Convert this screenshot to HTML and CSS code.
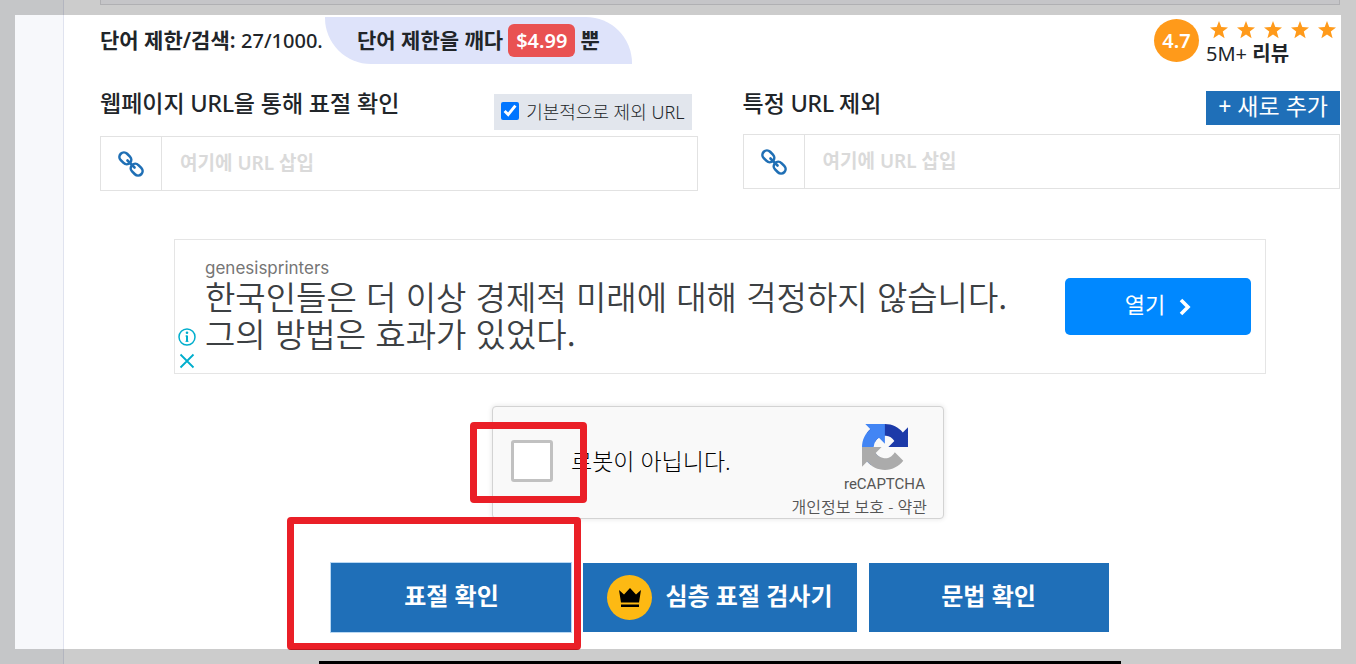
FILE: index.html
```html
<!DOCTYPE html>
<html lang="ko">
<head>
  <meta charset="UTF-8">
  <meta name="viewport" content="width=device-width, initial-scale=1.0">
  <title>표절 확인</title>
  <link rel="stylesheet" href="styles.css">
</head>
<body>

<svg class="defs" aria-hidden="true">
  <symbol id="star" viewBox="0 0 18 18">
    <path d="M9 0l2.3 6.1 6.7.3-5.2 4.2 1.8 6.6L9 13.5l-5.6 3.7 1.8-6.6L0 6.4l6.7-.3z"/>
  </symbol>
  <symbol id="chain" viewBox="0 0 26 26">
    <g fill="none" stroke="#1f6fb5" stroke-width="2.6" transform="rotate(45 13 13)">
      <rect x="-1.5" y="8.5" width="13" height="9" rx="4.5"/>
      <rect x="14.5" y="8.5" width="13" height="9" rx="4.5"/>
      <path d="M8 13h10" stroke-linecap="round"/>
    </g>
  </symbol>
</svg>

<div class="page">
  <aside class="side"></aside>
  <main class="content">
    <div class="editor-end"></div>

    <div class="stats">
      <div class="word-limit">단어 제한/검색: <span class="count">27/1000.</span></div>
      <a class="upgrade" href="#">단어 제한을 깨다 <span class="price">$4.99</span> 뿐</a>
      <div class="rating">
        <div class="score">4.7</div>
        <div class="rating-text">
          <div class="stars">
            <svg><use href="#star"/></svg>
            <svg><use href="#star"/></svg>
            <svg><use href="#star"/></svg>
            <svg><use href="#star"/></svg>
            <svg><use href="#star"/></svg>
          </div>
          <div class="reviews">5M+ <b>리뷰</b></div>
        </div>
      </div>
    </div>

    <div class="url-columns">
      <div>
        <div class="url-head">
          <label class="title" for="checkUrl">웹페이지 URL을 통해 표절 확인</label>
          <label class="exclude-default"><input type="checkbox" checked> 기본적으로 제외 URL</label>
        </div>
        <div class="url-box">
          <span class="url-icon"><svg><use href="#chain"/></svg></span>
          <input id="checkUrl" type="text" placeholder="여기에 URL 삽입">
        </div>
      </div>
      <div>
        <div class="url-head">
          <label class="title" for="excludeUrl">특정 URL 제외</label>
          <button class="add-new">+ 새로 추가</button>
        </div>
        <div class="url-box">
          <span class="url-icon"><svg><use href="#chain"/></svg></span>
          <input id="excludeUrl" type="text" placeholder="여기에 URL 삽입">
        </div>
      </div>
    </div>

    <div class="ad">
      <div class="ad-marks">
        <svg viewBox="0 0 18 18" fill="none" stroke="#00aecd">
          <circle cx="9" cy="9" r="8" stroke-width="1.5"/>
          <path d="M9 7.5v6" stroke-width="2"/>
          <path d="M7.5 8H9M7.5 13.3h3" stroke-width="1"/>
          <circle cx="9" cy="4.8" r="1.3" fill="#00aecd" stroke="none"/>
        </svg>
        <svg viewBox="0 0 18 18" fill="none" stroke="#00aecd" stroke-width="1.8">
          <path d="M2.5 2.5l13 13M15.5 2.5l-13 13"/>
        </svg>
      </div>
      <div class="ad-text">
        <div class="ad-brand">genesisprinters</div>
        <div class="ad-title">한국인들은 더 이상 경제적 미래에 대해 걱정하지 않습니다.<br>그의 방법은 효과가 있었다.</div>
      </div>
      <button class="ad-open">열기
        <svg viewBox="0 0 12 18" fill="none" stroke="#fff" stroke-width="3.6"><path d="M2 2l7 7-7 7"/></svg>
      </button>
    </div>

    <div class="captcha-row">
      <div class="captcha">
        <div class="captcha-check">
          <input id="robot" type="checkbox">
          <span class="marker"></span>
        </div>
        <label for="robot">로봇이 아닙니다.</label>
        <div class="captcha-brand">
          <svg viewBox="0 0 64 64">
            <path fill="#1c3aa9" d="M64 31.955l-.033-1.37V4.687l-7.16 7.16C50.948 4.674 42.033.093 32.05.093c-10.4 0-19.622 4.96-25.458 12.64l11.736 11.86a15.55 15.55 0 0 1 4.754-5.334c2.05-1.6 4.952-2.906 8.968-2.906.485 0 .86.057 1.135.163 4.976.393 9.288 3.14 11.828 7.124l-8.307 8.307L64 31.953"/>
            <path fill="#4285f4" d="M31.862.094l-1.37.033H4.594l7.16 7.16C4.58 13.147 0 22.06 0 32.046c0 10.4 4.96 19.622 12.64 25.458L24.5 45.768a15.55 15.55 0 0 1-5.334-4.754c-1.6-2.05-2.906-4.952-2.906-8.968 0-.485.057-.86.163-1.135.393-4.976 3.14-9.288 7.124-11.828l8.307 8.307L31.86.095"/>
            <path fill="#ababab" d="M.001 32.045l.033 1.37v25.898l7.16-7.16c5.86 7.173 14.774 11.754 24.76 11.754 10.4 0 19.622-4.96 25.458-12.64l-11.736-11.86a15.55 15.55 0 0 1-4.754 5.334c-2.05 1.6-4.952 2.906-8.968 2.906-.485 0-.86-.057-1.135-.163-4.976-.393-9.288-3.14-11.828-7.124l8.307-8.307c-10.522.04-22.4.066-27.295-.005"/>
          </svg>
          <div class="captcha-name">reCAPTCHA</div>
          <div class="captcha-links"><a href="#">개인정보 보호</a> - <a href="#">약관</a></div>
        </div>
      </div>
    </div>

    <div class="actions">
      <div class="action-main">
        <button class="action">표절 확인</button>
        <span class="marker"></span>
      </div>
      <button class="action deep">
        <span class="crown">
          <svg viewBox="0 0 24 20"><path d="M1 2l5 4.5L12 0l6 6.5L23 2l-2 12.5H3zM3 16.5h18V19H3z"/></svg>
        </span>
        심층 표절 검사기
      </button>
      <button class="action">문법 확인</button>
    </div>

    <div class="next-block"></div>
  </main>
</div>

</body>
</html>
```
FILE: styles.css
```css
* { box-sizing: border-box; margin: 0; padding: 0; }
body {
  font-family: "Noto Sans", "Noto Sans CJK KR", sans-serif;
  font-size: 20px;
  color: #212529;
  background: #fff;
}
/* shaded frame around the window */
body::after {
  content: "";
  position: fixed;
  inset: 0;
  border: 15px solid rgba(0,0,0,0.2);
  pointer-events: none;
  z-index: 5;
}
button, input { font-family: inherit; }
button { border: none; cursor: pointer; }
a { color: inherit; text-decoration: none; }
.defs { display: none; }

.page {
  display: flex;
  min-height: 100vh;
}
.side {
  width: 64px;
  flex: none;
  background: #f7f8fb;
  border-right: 1px solid #e0e3ef;
}
.content {
  flex: 1;
  padding: 0 16px 0 36px;
}
.editor-end {
  height: 5px;
  background: #f7f7fa;
  border: 1px solid #dcdce0;
  border-top: none;
}

.stats {
  display: flex;
  align-items: center;
  height: 47px;
  margin-top: 12px;
  font-size: 21px;
  font-weight: 600;
}
.word-limit {
  width: 225px;
  padding-bottom: 4px;
  white-space: nowrap;
}
.count {
  font-size: 20px;
  font-weight: 500;
}
.upgrade {
  display: flex;
  align-items: center;
  gap: 5px;
  height: 47px;
  padding: 0 32px 4px;
  background: #dee3fa;
  border-radius: 0 46px 0 46px;
}
.price {
  height: 33px;
  line-height: 33px;
  margin-top: 4px;
  padding: 0 8px;
  border-radius: 6px;
  background: #e95252;
  color: #fff;
  font-size: 20px;
}
.rating {
  display: flex;
  align-items: center;
  gap: 7px;
  margin-left: auto;
  padding-right: 4px;
  font-size: 20px;
}
.score {
  width: 45px;
  height: 43px;
  line-height: 43px;
  border-radius: 50%;
  text-align: center;
  background: #ff9a1a;
  color: #fff;
}
.rating-text { padding-top: 7px; }
.stars {
  display: flex;
  gap: 9px;
  padding-left: 4px;
}
.stars svg {
  width: 18px;
  height: 18px;
  fill: #ff9a1a;
}
.reviews {
  font-weight: 400;
  line-height: 29px;
}

.url-columns {
  display: grid;
  grid-template-columns: 1fr 1fr;
  gap: 45px;
  margin-top: 27px;
}
.url-head {
  display: flex;
  justify-content: space-between;
  align-items: flex-start;
}
.title {
  font-family: Lato, "Noto Sans CJK KR", sans-serif;
  font-size: 23px;
  font-weight: 500;
  line-height: 25px;
}
.exclude-default {
  display: flex;
  align-items: center;
  gap: 7px;
  height: 36px;
  margin: 3px 6px 6px 0;
  padding: 0 7px 2px;
  background: #e2e6ed;
  font-size: 18px;
  font-weight: 300;
}
.exclude-default input {
  width: 18px;
  height: 18px;
  accent-color: #0075ff;
}
.add-new {
  height: 34px;
  line-height: 30px;
  margin-bottom: 9px;
  padding: 0 12px 4px;
  background: #1f6fb8;
  color: #fff;
  font-size: 23px;
}
.url-box {
  display: flex;
  height: 55px;
  border: 1px solid #e2e2e2;
}
.url-icon {
  display: flex;
  align-items: center;
  justify-content: center;
  width: 61px;
  border-right: 1px solid #e2e2e2;
}
.url-icon svg { width: 26px; height: 26px; }
.url-box input {
  flex: 1;
  min-width: 0;
  border: none;
  outline: none;
  padding: 0 18px 2px;
  font-size: 19px;
  font-weight: 600;
}
.url-box input::placeholder { color: #dadada; }

.ad {
  display: flex;
  align-items: center;
  height: 135px;
  margin: 48px 74px 0;
  padding-right: 14px;
  border: 1px solid #e5e5e5;
}
.ad-marks {
  display: flex;
  flex-direction: column;
  align-self: flex-end;
  gap: 6px;
  width: 30px;
  padding: 0 0 3px 3px;
}
.ad-marks svg { width: 18px; height: 18px; }
.ad-text {
  flex: 1;
  padding-bottom: 4px;
}
.ad-brand {
  font-family: Inter, sans-serif;
  font-size: 17px;
  line-height: 20px;
  color: #757575;
}
.ad-title {
  font-family: "Noto Sans CJK KR", sans-serif;
  font-size: 33px;
  font-weight: 350;
  line-height: 37px;
  color: #3c4043;
}
.ad-open {
  display: flex;
  align-items: center;
  justify-content: center;
  gap: 14px;
  width: 186px;
  height: 57px;
  padding-bottom: 8px;
  border-radius: 5px;
  background: #0088ff;
  color: #fff;
  font-size: 22px;
}
.ad-open svg {
  width: 12px;
  height: 18px;
  margin-top: 8px;
}

/* red highlight around a control */
.marker {
  position: absolute;
  border: 7px solid #ea1f27;
  border-radius: 4px;
  pointer-events: none;
  z-index: 2;
}

.captcha-row {
  display: flex;
  justify-content: center;
  margin-top: 32px;
  padding-right: 4px;
}
.captcha {
  display: flex;
  align-items: center;
  width: 452px;
  height: 113px;
  padding: 0 16px 4px 18px;
  background: #f9f9f9;
  border: 1px solid #d3d3d3;
  border-radius: 4px;
  box-shadow: 0 0 4px 1px rgba(0,0,0,0.08);
  color: #000;
}
.captcha label {
  padding-bottom: 2px;
  font-size: 23px;
  font-weight: 300;
}
.captcha-check {
  position: relative;
  width: 42px;
  height: 42px;
  margin-right: 18px;
}
.captcha-check input {
  appearance: none;
  width: 42px;
  height: 42px;
  background: #fff;
  border: 3px solid #c1c1c1;
  border-radius: 3px;
}
.captcha-check .marker { inset: -18px -34px -21px -41px; }
.captcha-brand {
  display: flex;
  flex-direction: column;
  align-items: flex-end;
  margin-left: auto;
  padding-top: 18px;
  color: #555;
}
.captcha-brand svg {
  width: 46px;
  height: 46px;
  margin-right: 19px;
}
.captcha-name {
  margin-right: 2px;
  font-family: Roboto, sans-serif;
  font-size: 15px;
  line-height: 28px;
}
.captcha-links {
  font-size: 16px;
  font-weight: 350;
  line-height: 18px;
}

.actions {
  display: flex;
  justify-content: center;
  gap: 12px;
  margin-top: 44px;
}
.action-main { position: relative; }
.action-main .marker { inset: -46px -10px -18px -44px; }
.action-main .action { outline: 1px solid #b9d8f3; }
.action {
  min-width: 240px;
  height: 69px;
  padding-bottom: 7px;
  background: #1f6fb8;
  color: #fff;
  font-size: 24px;
  font-weight: 600;
}
.deep {
  display: flex;
  align-items: center;
  gap: 13px;
  padding: 0 24px 7px;
}
.crown {
  display: flex;
  align-items: center;
  justify-content: center;
  width: 45px;
  height: 45px;
  margin-top: 7px;
  border-radius: 50%;
  background: #fdb913;
}
.crown svg { width: 24px; height: 20px; }

.next-block {
  max-width: 802px;
  height: 3px;
  margin: 29px auto 0;
  background: #000;
}
```
